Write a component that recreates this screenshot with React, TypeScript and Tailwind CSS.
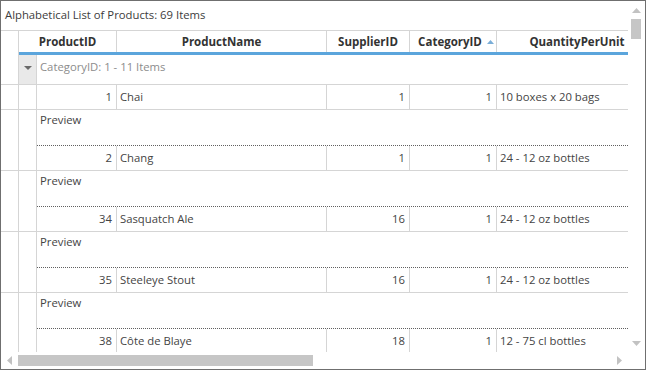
import React from 'react';

interface Product {
  id: number;
  name: string;
  supplier: number;
  category: number;
  qty: string;
}

const PRODUCTS: Product[] = [
  { id: 1, name: 'Chai', supplier: 1, category: 1, qty: '10 boxes x 20 bags' },
  { id: 2, name: 'Chang', supplier: 1, category: 1, qty: '24 - 12 oz bottles' },
  { id: 34, name: 'Sasquatch Ale', supplier: 16, category: 1, qty: '24 - 12 oz bottles' },
  { id: 35, name: 'Steeleye Stout', supplier: 16, category: 1, qty: '24 - 12 oz bottles' },
  { id: 38, name: 'Côte de Blaye', supplier: 18, category: 1, qty: '12 - 75 cl bottles' },
];

const line = 'border-[#d5d5d5]';

const Indent = ({ gray, children }: { gray?: boolean; children?: React.ReactNode }) => (
  <div className={`w-[18px] shrink-0 border-r ${line} flex items-center justify-center ${gray ? 'bg-[#e9e9e9]' : ''}`}>
    {children}
  </div>
);

export default function App() {
  return (
    <div
      className="w-[646px] h-[370px] border border-[#6f6f6f] bg-white flex flex-col overflow-hidden text-[11.3px] text-[#444]"
      style={{ fontFamily: '"Open Sans", "Noto Sans", sans-serif' }}
    >
      <div className="flex flex-1 min-h-0">
        <div className="w-[627px] shrink-0 flex flex-col min-h-0">
          <div className="h-[29px] shrink-0 pl-[4px] flex items-center text-[#3c3c3c]">
            Alphabetical List of Products: 69 Items
          </div>

          <div className={`flex-1 min-h-0 overflow-hidden border-t ${line}`}>
            {/* header */}
            <div className="flex h-[24px]">
              <Indent />
              <div className="flex flex-1 border-b-[3px] border-[#5ba5dc] font-bold text-[#333] text-[11.5px]">
                <div className={`w-[98px] shrink-0 border-r ${line} flex items-center justify-center`}>ProductID</div>
                <div className={`w-[210px] shrink-0 border-r ${line} flex items-center justify-center`}>ProductName</div>
                <div className={`w-[83px] shrink-0 border-r ${line} flex items-center justify-center`}>SupplierID</div>
                <div className={`w-[87px] shrink-0 border-r ${line} flex items-center justify-center gap-[5px] pl-[6px]`}>
                  CategoryID
                  <svg width="7" height="4" viewBox="0 0 7 4"><path d="M0 4 L3.5 0 L7 4 Z" fill="#7aaed8" /></svg>
                </div>
                <div className="w-[160px] shrink-0 flex items-center justify-center">QuantityPerUnit</div>
              </div>
            </div>

            {/* group row */}
            <div className={`flex h-[30px] border-b ${line}`}>
              <Indent />
              <Indent gray>
                <svg width="8" height="4" viewBox="0 0 8 4" className="mb-[4px]"><path d="M0 0 L8 0 L4 4 Z" fill="#6a6a6a" /></svg>
              </Indent>
              <div className="flex items-center pl-[3px] pb-[4px] text-[#8c8c8c]">CategoryID: 1 - 11 Items</div>
            </div>

            {PRODUCTS.map(p => (
              <React.Fragment key={p.id}>
                <div className={`flex h-[25px] border-b ${line}`}>
                  <Indent />
                  <Indent />
                  <div className={`w-[80px] shrink-0 border-r ${line} flex items-center justify-end pr-[4px]`}>{p.id}</div>
                  <div className={`w-[210px] shrink-0 border-r ${line} flex items-center pl-[3px]`}>{p.name}</div>
                  <div className={`w-[83px] shrink-0 border-r ${line} flex items-center justify-end pr-[4px]`}>{p.supplier}</div>
                  <div className={`w-[87px] shrink-0 border-r ${line} flex items-center justify-end pr-[4px]`}>{p.category}</div>
                  <div className="w-[160px] shrink-0 flex items-center pl-[3px] whitespace-nowrap">{p.qty}</div>
                </div>
                <div className="flex h-[36px]">
                  <Indent />
                  <Indent />
                  <div className="flex-1 border-b border-dotted border-[#606060] pl-[3px] pt-[2px]">Preview</div>
                </div>
              </React.Fragment>
            ))}
          </div>
        </div>

        {/* vertical scrollbar */}
        <div className="w-[17px] shrink-0 flex flex-col items-center pt-[7px] pb-[6px] pr-[1px]">
          <svg width="9" height="5" viewBox="0 0 9 5"><path d="M0 5 L4.5 0 L9 5 Z" fill="#c2c2c2" /></svg>
          <div className="mt-[6px] w-[10px] h-[20px] bg-[#c6c6c6]" />
          <div className="flex-1" />
          <svg width="9" height="5" viewBox="0 0 9 5"><path d="M0 0 L9 0 L4.5 5 Z" fill="#c2c2c2" /></svg>
        </div>
      </div>

      {/* horizontal scrollbar */}
      <div className="h-[17px] shrink-0 flex items-center">
        <div className="w-[627px] flex items-center pl-[6px] pr-[6px]">
          <svg width="5" height="9" viewBox="0 0 5 9"><path d="M5 0 L0 4.5 L5 9 Z" fill="#c2c2c2" /></svg>
          <div className="ml-[6px] w-[295px] h-[11px] bg-[#c6c6c6]" />
          <div className="flex-1" />
          <svg width="5" height="9" viewBox="0 0 5 9"><path d="M0 0 L5 4.5 L0 9 Z" fill="#c2c2c2" /></svg>
        </div>
      </div>
    </div>
  );
}
